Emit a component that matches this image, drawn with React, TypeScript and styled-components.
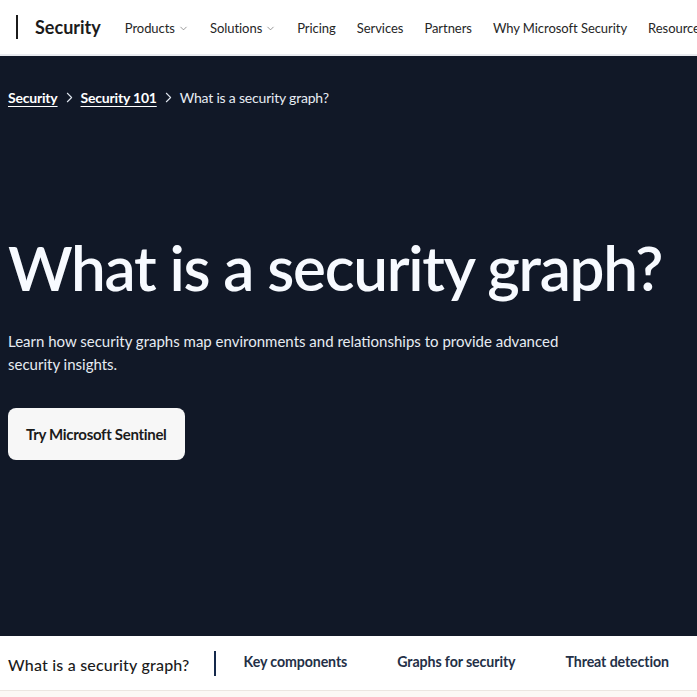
import styled, { createGlobalStyle } from "styled-components";
import { FiChevronDown, FiChevronRight } from "react-icons/fi";

const GlobalStyle = createGlobalStyle`
  html, body {
    margin: 0;
    padding: 0;
    background: #ffffff;
    font-family: Lato, "Open Sans", "Liberation Sans", sans-serif;
  }
  * {
    box-sizing: border-box;
  }
`;

const navLinks = [
  { label: "Products", menu: true },
  { label: "Solutions", menu: true },
  { label: "Pricing" },
  { label: "Services" },
  { label: "Partners" },
  { label: "Why Microsoft Security" },
  { label: "Resources" },
];

const sections = ["Key components", "Graphs for security", "Threat detection"];

export default function App() {
  return (
    <>
      <GlobalStyle />
      <Page>
        <Header>
          <Brand>Security</Brand>
          <Nav>
            {navLinks.map((link) => (
              <NavItem key={link.label}>
                {link.label}
                {link.menu && <FiChevronDown size={11} strokeWidth={1.5} />}
              </NavItem>
            ))}
          </Nav>
        </Header>

        <Hero>
          <Breadcrumb>
            <Crumb href="#">Security</Crumb>
            <FiChevronRight size={17} strokeWidth={1.5} />
            <Crumb href="#">Security 101</Crumb>
            <FiChevronRight size={17} strokeWidth={1.5} />
            <Current>What is a security graph?</Current>
          </Breadcrumb>

          <Title>What is a security graph?</Title>
          <Lead>
            Learn how security graphs map environments and relationships to
            provide advanced security insights.
          </Lead>
          <CtaButton>Try Microsoft Sentinel</CtaButton>
        </Hero>

        <SectionNav>
          <SectionCurrent>What is a security graph?</SectionCurrent>
          <Divider />
          {sections.map((s) => (
            <SectionLink key={s}>{s}</SectionLink>
          ))}
        </SectionNav>
        <Below />
      </Page>
    </>
  );
}

const Page = styled.div`
  width: 697px;
  height: 697px;
  overflow: hidden;
  display: flex;
  flex-direction: column;
`;

// 상단 헤더
const Header = styled.header`
  height: 56px;
  flex-shrink: 0;
  display: flex;
  align-items: center;
  padding-left: 16px;
  background: #ffffff;
  border-bottom: 2px solid #e8eaef;
  white-space: nowrap;
`;

const Brand = styled.div`
  flex-shrink: 0;
  height: 24px;
  display: flex;
  align-items: center;
  border-left: 2px solid #1b1b1b;
  padding-left: 17px;
  margin-right: 24px;
  font-size: 18px;
  font-weight: 700;
  color: #1b1b1b;
`;

const Nav = styled.nav`
  display: flex;
  align-items: center;
  gap: 21px;
`;

const NavItem = styled.span`
  flex-shrink: 0;
  display: inline-flex;
  align-items: center;
  gap: 3px;
  font-size: 13px;
  letter-spacing: -0.05px;
  color: #262626;
  margin-top: 2px;
  svg {
    color: #6b6b6b;
    margin-top: 1px;
  }
`;

// 다크 히어로 영역
const Hero = styled.section`
  height: 580px;
  flex-shrink: 0;
  background: #111827;
  padding: 33px 8px 0;
  color: #f3f6fb;
`;

const Breadcrumb = styled.div`
  display: flex;
  align-items: center;
  gap: 3px;
  font-size: 14px;
  letter-spacing: -0.2px;
  svg {
    color: #dfe5ee;
    margin: 0;
  }
`;

const Crumb = styled.a`
  color: #ffffff;
  font-weight: 700;
  text-decoration: underline;
  text-underline-offset: 3px;
`;

const Current = styled.span`
  color: #e8edf4;
`;

const Title = styled.h1`
  margin: 127px 0 0;
  font-size: 62px;
  font-weight: 600;
  line-height: 1.1;
  letter-spacing: -1.3px;
  color: #f7faff;
  white-space: nowrap;
`;

const Lead = styled.p`
  margin: 29px 0 0;
  max-width: 580px;
  font-size: 15px;
  line-height: 23px;
  color: #e6ebf2;
`;

const CtaButton = styled.button`
  margin-top: 32px;
  height: 52px;
  padding: 0 18px;
  border: none;
  border-radius: 8px;
  background: #f7f7f7;
  color: #1b1b1b;
  font-family: inherit;
  font-size: 15px;
  font-weight: 700;
  letter-spacing: -0.3px;
`;

// 하단 섹션 탭
const SectionNav = styled.nav`
  height: 55px;
  flex-shrink: 0;
  display: flex;
  align-items: center;
  padding-left: 8px;
  background: #ffffff;
  border-bottom: 1px solid #ebe6e1;
  white-space: nowrap;
`;

const SectionCurrent = styled.span`
  flex-shrink: 0;
  font-size: 16px;
  font-weight: 500;
  letter-spacing: 0.2px;
  color: #1b1b1b;
  margin-top: 2px;
`;

const Divider = styled.span`
  flex-shrink: 0;
  width: 2px;
  height: 25px;
  background: #15294b;
  margin: 0 28px 0 24px;
`;

const SectionLink = styled.a`
  flex-shrink: 0;
  font-size: 14.2px;
  font-weight: 700;
  letter-spacing: -0.1px;
  color: #243047;
  margin-right: 50px;
  margin-top: -4px;
`;

const Below = styled.div`
  flex: 1;
  background: #fbf8f5;
`;
